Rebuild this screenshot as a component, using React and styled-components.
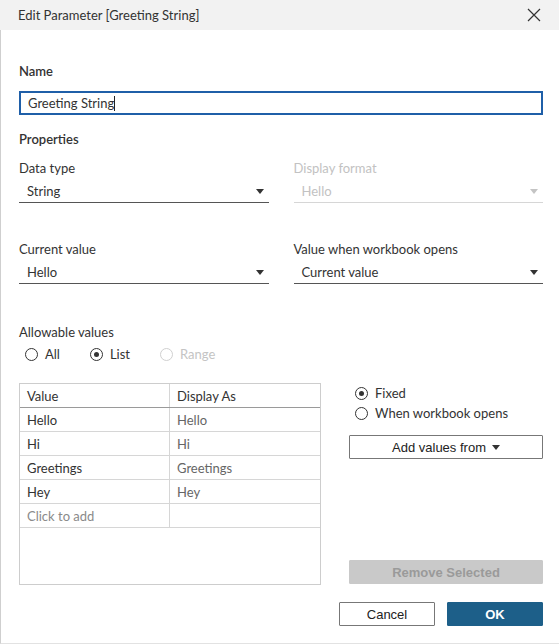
import React from 'react';
import styled, { createGlobalStyle } from 'styled-components';

const GlobalStyle = createGlobalStyle`
    html, body {
        margin: 0;
        padding: 0;
        background: #ffffff;
    }
    body {
        font-family: Lato, "Open Sans", sans-serif;
        font-size: 13px;
        color: #333333;
    }
`;

const rows = [
    { value: 'Hello', display: 'Hello' },
    { value: 'Hi', display: 'Hi' },
    { value: 'Greetings', display: 'Greetings' },
    { value: 'Hey', display: 'Hey' },
];

const Caret = ({ disabled }) => (
    <svg width="8" height="5" viewBox="0 0 8 5">
        <path d="M0 0 L8 0 L4 5 Z" fill={disabled ? '#c4c4c4' : '#333'} />
    </svg>
);

const Select = ({ label, value, disabled }) => (
    <Field>
        <Label $disabled={disabled}>{label}</Label>
        <SelectBox $disabled={disabled}>
            <span>{value}</span>
            <Caret disabled={disabled} />
        </SelectBox>
    </Field>
);

const Radio = ({ label, checked, disabled }) => (
    <RadioItem $disabled={disabled}>
        <RadioCircle $checked={checked} $disabled={disabled} />
        <span>{label}</span>
    </RadioItem>
);

const App = () => {
    return (
        <Dialog>
            <GlobalStyle />

            <TitleBar>
                <span>Edit Parameter [Greeting String]</span>
                <svg width="14" height="14" viewBox="0 0 14 14">
                    <path d="M1 1 L13 13 M13 1 L1 13" stroke="#333" strokeWidth="1.2" />
                </svg>
            </TitleBar>

            <Body>
                <SectionTitle>Name</SectionTitle>
                <NameInput>Greeting String<Cursor /></NameInput>

                <SectionTitle>Properties</SectionTitle>

                <FieldGrid>
                    <Select label="Data type" value="String" />
                    <Select label="Display format" value="Hello" disabled />
                    <Select label="Current value" value="Hello" />
                    <Select label="Value when workbook opens" value="Current value" />
                </FieldGrid>

                <AllowLabel>Allowable values</AllowLabel>
                <RadioRow>
                    <Radio label="All" />
                    <Radio label="List" checked />
                    <Radio label="Range" disabled />
                </RadioRow>

                <ListArea>
                    <Table>
                        <Row $header>
                            <Cell>Value</Cell>
                            <Cell>Display As</Cell>
                        </Row>
                        {rows.map((r) => (
                            <Row key={r.value}>
                                <Cell>{r.value}</Cell>
                                <Cell $muted>{r.display}</Cell>
                            </Row>
                        ))}
                        <Row>
                            <Cell $hint>Click to add</Cell>
                            <Cell />
                        </Row>
                    </Table>

                    <SideColumn>
                        <RadioStack>
                            <Radio label="Fixed" checked />
                            <Radio label="When workbook opens" />
                        </RadioStack>
                        <Button>
                            Add values from
                            <svg width="8" height="5" viewBox="0 0 8 5">
                                <path d="M0 0 L8 0 L4 5 Z" fill="#333" />
                            </svg>
                        </Button>
                        <Spacer />
                        <Button $disabled>Remove Selected</Button>
                    </SideColumn>
                </ListArea>

                <Footer>
                    <Button>Cancel</Button>
                    <Button $primary>OK</Button>
                </Footer>
            </Body>
        </Dialog>
    );
};

const Dialog = styled.div`
    width: 559px;
    height: 644px;
    box-sizing: border-box;
    border-left: 1px solid #cfcfcf;
    border-bottom: 1px solid #e2e2e2;
    display: flex;
    flex-direction: column;
    background: #fff;
`;

const TitleBar = styled.div`
    height: 30px;
    background: #f2f2f2;
    display: flex;
    align-items: center;
    justify-content: space-between;
    padding: 0 18px 0 18px;
    margin-left: -1px;
    font-size: 13px;
    color: #333;
`;

const Body = styled.div`
    padding: 33px 16px 0 18px;
    display: flex;
    flex-direction: column;
`;

const SectionTitle = styled.div`
    font-size: 13px;
    line-height: 16px;
    font-weight: 600;
    color: #333;
    margin-bottom: 12px;
`;

const NameInput = styled.div`
    height: 24px;
    box-sizing: border-box;
    border: 2px solid #1f5fa8;
    padding: 0 7px;
    display: flex;
    align-items: center;
    color: #333;
    margin-bottom: 16px;
`;

const Cursor = styled.span`
    display: inline-block;
    width: 1px;
    height: 15px;
    background: #222;
`;

const FieldGrid = styled.div`
    display: grid;
    grid-template-columns: 1fr 1fr;
    column-gap: 25px;
    row-gap: 38px;
    margin-top: 1px;
`;

const Field = styled.div`
    display: flex;
    flex-direction: column;
`;

const Label = styled.div`
    line-height: 16px;
    color: ${(p) => (p.$disabled ? '#c2c2c2' : '#333')};
    margin-bottom: 4px;
`;

const SelectBox = styled.div`
    height: 22px;
    border-bottom: 1px solid ${(p) => (p.$disabled ? '#d6d6d6' : '#555')};
    display: flex;
    align-items: center;
    justify-content: space-between;
    padding: 0 5px 0 8px;
    color: ${(p) => (p.$disabled ? '#c2c2c2' : '#333')};
`;

const AllowLabel = styled.div`
    line-height: 16px;
    margin-top: 40px;
`;

const RadioRow = styled.div`
    display: flex;
    gap: 30px;
    margin-top: 6px;
    padding-left: 6px;
`;

const RadioItem = styled.div`
    display: flex;
    align-items: center;
    gap: 7px;
    line-height: 16px;
    color: ${(p) => (p.$disabled ? '#c4c4c4' : '#333')};
`;

const RadioCircle = styled.span`
    width: 13px;
    height: 13px;
    box-sizing: border-box;
    border-radius: 50%;
    border: 1px solid ${(p) => (p.$disabled ? '#d0d0d0' : '#333')};
    display: flex;
    align-items: center;
    justify-content: center;

    &::after {
        content: '';
        width: 5px;
        height: 5px;
        border-radius: 50%;
        background: #333;
        display: ${(p) => (p.$checked ? 'block' : 'none')};
    }
`;

const ListArea = styled.div`
    display: grid;
    grid-template-columns: 302px 194px;
    column-gap: 28px;
    margin-top: 21px;
`;

const Table = styled.div`
    height: 202px;
    box-sizing: border-box;
    border: 1px solid #cdcdcd;
    display: flex;
    flex-direction: column;
`;

const Row = styled.div`
    display: grid;
    grid-template-columns: 150px 1fr;
    height: 24px;
    box-sizing: border-box;
    border-bottom: 1px solid ${(p) => (p.$header ? '#9a9a9a' : '#d6d6d6')};
`;

const Cell = styled.div`
    display: flex;
    align-items: center;
    padding-left: 7px;
    color: ${(p) => (p.$hint ? '#8a8a8a' : p.$muted ? '#666' : '#333')};

    &:first-child {
        border-right: 1px solid #d6d6d6;
    }
`;

const SideColumn = styled.div`
    display: flex;
    flex-direction: column;
`;

const RadioStack = styled.div`
    display: flex;
    flex-direction: column;
    gap: 4px;
    padding: 2px 0 0 6px;
    margin-bottom: 14px;
`;

const Spacer = styled.div`
    flex: 1;
`;

const Button = styled.div`
    height: 24px;
    box-sizing: border-box;
    display: flex;
    align-items: center;
    justify-content: center;
    gap: 6px;
    font-family: "Liberation Sans", Arial, sans-serif;
    font-size: 13px;
    border-radius: 1px;
    border: 1px solid ${(p) => (p.$primary ? '#1d5f89' : p.$disabled ? '#c9c9c9' : '#777')};
    background: ${(p) => (p.$primary ? '#1d5f89' : p.$disabled ? '#c9c9c9' : '#fff')};
    color: ${(p) => (p.$primary ? '#fff' : p.$disabled ? '#9a9a9a' : '#222')};
    font-weight: ${(p) => (p.$primary || p.$disabled ? 700 : 400)};
    margin-bottom: 1px;
`;

const Footer = styled.div`
    display: flex;
    justify-content: flex-end;
    gap: 12px;
    margin-top: 17px;

    & > * {
        width: 96px;
    }
`;

export default App;
